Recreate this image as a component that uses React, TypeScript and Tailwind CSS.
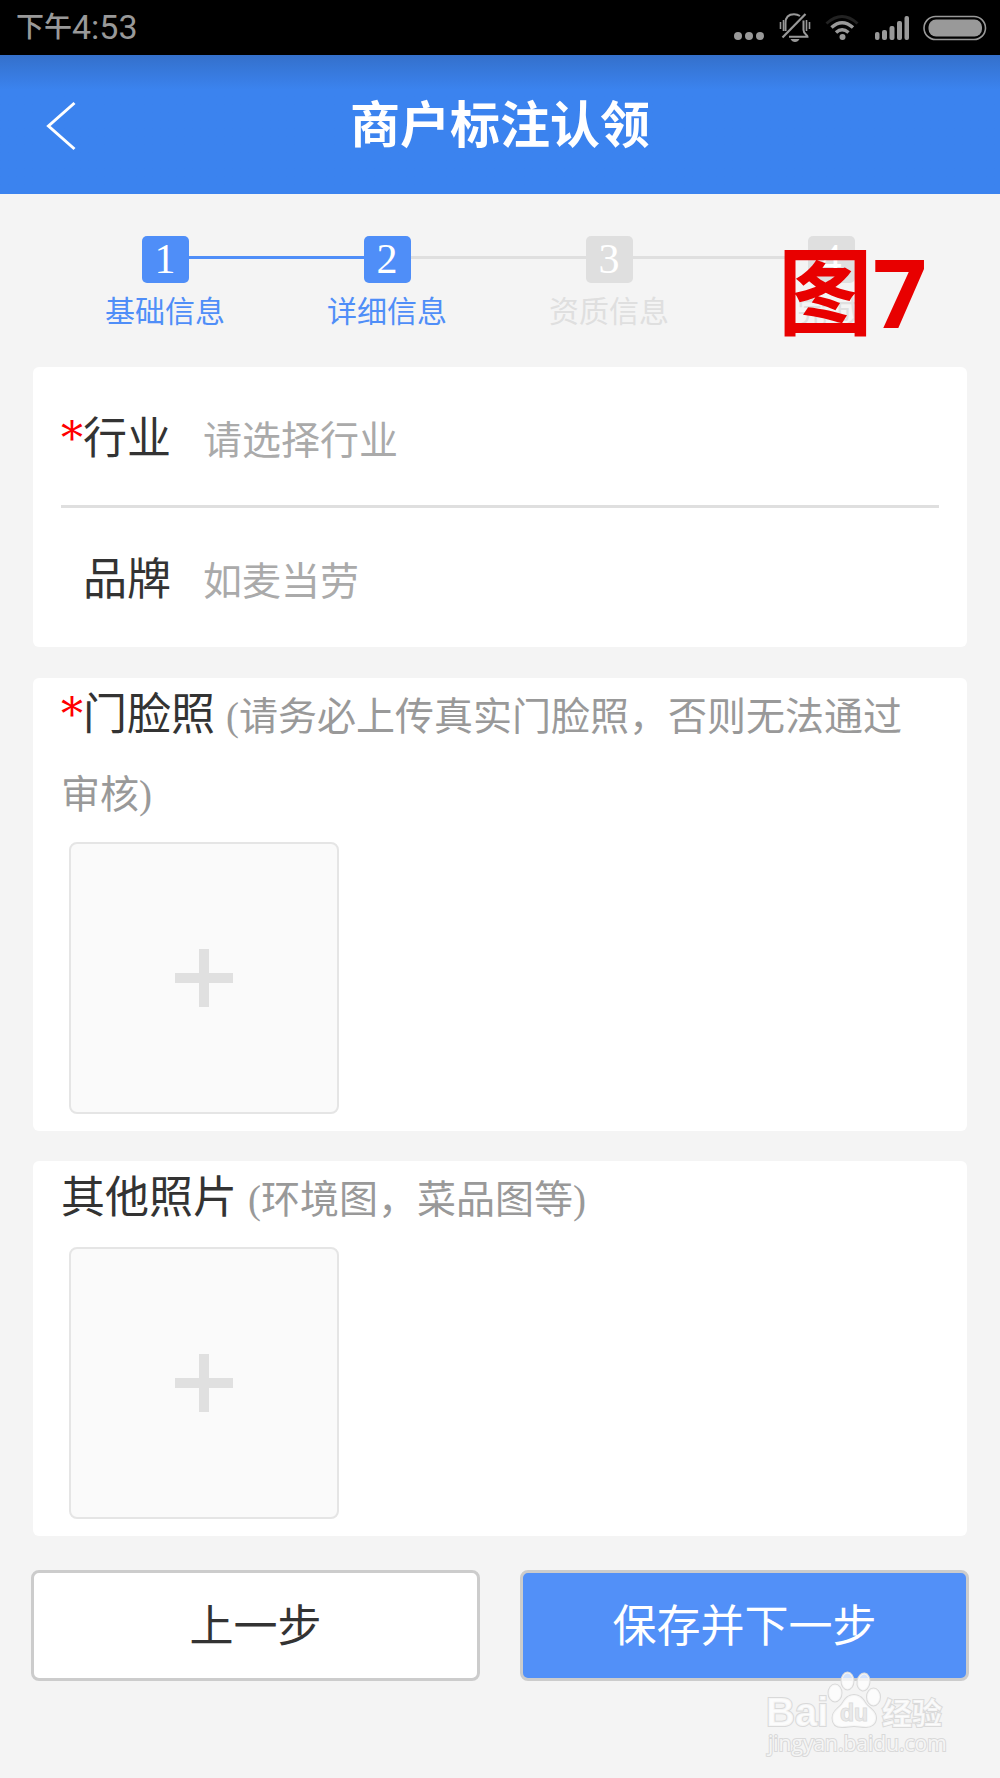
import { clsx } from 'clsx';

const steps = [
  { no: 1, label: '基础信息', done: true },
  { no: 2, label: '详细信息', done: true },
  { no: 3, label: '资质信息', done: false },
  { no: 4, label: '完 成', done: false },
];

const StatusBar = () => (
  <div className="h-[55px] bg-black text-[#999] flex items-center justify-between pl-4 pr-[13px]">
    <div className="flex items-center font-['Roboto','Noto_Sans_CJK_SC',sans-serif]">
      <span className="text-[28px] leading-[55px] font-medium">下午</span>
      <span className="text-[34px] leading-[55px]">4:53</span>
    </div>
    <div className="flex items-center gap-[13px]">
      <svg width="32" height="55" viewBox="0 0 32 55" fill="currentColor">
        <circle cx="5" cy="36" r="4" />
        <circle cx="16" cy="36" r="4" />
        <circle cx="27" cy="36" r="4" />
      </svg>
      <svg width="33" height="55" viewBox="0 0 33 55" fill="none" stroke="currentColor" strokeWidth="2">
        <path d="M7.500 31V23C7.500 17 11 14.300 16 14.300C18.500 14.300 20.500 15 22 16" />
        <path d="M11 36.700H29.500C29.500 34.500 25.500 34 25.500 30V20.500" />
        <path d="M27.500 14L4.500 37.500" strokeWidth="2.200" />
        <path d="M12.500 39H21.500C20.500 41 19 42 17 42C15 42 13.500 41 12.500 39Z" fill="currentColor" stroke="none" />
        <path d="M2.500 22V29M5.500 20V31M28.500 20V31M31.500 22V29" strokeWidth="1.600" />
      </svg>
      <svg width="35" height="55" viewBox="0 0 35 55" fill="none" stroke="currentColor" strokeWidth="3.500">
        <path d="M2.500 23.500Q18 9.500 33.500 23.500" stroke="#222" strokeWidth="3" />
        <path d="M7.500 27.500Q18 18 29 27.500" />
        <path d="M12 32.500Q18 27 24.500 32.500" />
        <circle cx="18.500" cy="37" r="3" fill="currentColor" stroke="none" />
      </svg>
      <svg width="38" height="55" viewBox="0 0 38 55" fill="currentColor">
        <rect x="3" y="32" width="4.500" height="8" rx="2" />
        <rect x="10" y="30" width="5" height="10" rx="2" />
        <rect x="17.500" y="26" width="5" height="14" rx="2" />
        <rect x="25" y="21" width="5" height="19" rx="2" />
        <rect x="32.500" y="16" width="4.500" height="24" rx="2" />
      </svg>
      <svg width="64" height="55" viewBox="0 0 64 55">
        <rect x="1" y="16.500" width="61.500" height="23" rx="11.500" fill="none" stroke="currentColor" strokeWidth="1.600" />
        <rect x="5.500" y="19.500" width="53.500" height="17" rx="7.500" fill="currentColor" />
      </svg>
    </div>
  </div>
);

const Header = () => (
  <header className="h-[139px] bg-[#3b83ef] bg-linear-to-b from-[#3470cb] to-[#3b83ef] to-25% grid grid-cols-[1fr_auto_1fr] items-center px-[45px] pt-0.5">
    <button aria-label="返回" className="justify-self-start">
      <svg width="32" height="50" viewBox="0 0 32 50" fill="none" stroke="#fff" strokeWidth="3">
        <path d="M29.500 2L3.500 25L29.500 48" />
      </svg>
    </button>
    <h1 className="text-white text-[50px] leading-[74px] font-bold">商户标注认领</h1>
  </header>
);

const Steps = () => (
  <ol className="flex pl-[54px] pr-[58px] pt-[42px]">
    {steps.map((step, i) => (
      <li key={step.no} className="flex-1 flex flex-col items-center gap-0.5">
        <div className="w-full flex items-center">
          <span
            className={clsx(
              'flex-1 h-[3px] mb-[5px]',
              i === 0 ? 'bg-transparent' : step.done ? 'bg-[#4f8ef8]' : 'bg-[#dfdfdf]'
            )}
          />
          <span
            className={clsx(
              'size-[47px] rounded-[5px] text-white text-[42px] leading-[47px] text-center',
              step.done ? 'bg-[#4f8ef8]' : 'bg-[#dfdfdf]'
            )}
          >
            {step.no}
          </span>
          <span
            className={clsx(
              'flex-1 h-[3px] mb-[5px]',
              i === steps.length - 1 ? 'bg-transparent' : steps[i + 1].done ? 'bg-[#4f8ef8]' : 'bg-[#dfdfdf]'
            )}
          />
        </div>
        <span className={clsx('text-[30px] leading-[54px]', step.done ? 'text-[#4f8ef8]' : 'text-[#dfdfdf]')}>
          {step.label}
        </span>
      </li>
    ))}
  </ol>
);

const Required = () => <span className="text-[#f00] font-['DejaVu_Serif',serif]">*</span>;

const UploadButton = ({ label }: { label: string }) => (
  <button
    aria-label={label}
    className="m-2 w-[270px] h-[272px] flex items-center justify-center rounded-lg border-2 border-[#e5e5e5] bg-[#fafafa]"
  >
    <svg width="58" height="58" viewBox="0 0 58 58" fill="#e0e0e0">
      <path d="M24 0h10v24h24v10H34v24H24V34H0V24h24z" />
    </svg>
  </button>
);

const Watermark = () => (
  <svg
    width="194"
    height="98"
    viewBox="0 0 194 98"
    className="absolute right-[15px] top-[95px] pointer-events-none"
    fill="#fff"
    fillOpacity="0.750"
    stroke="#d9d9d9"
    strokeWidth="2"
    paintOrder="stroke"
  >
    <ellipse cx="75" cy="28" rx="6.500" ry="8.500" />
    <ellipse cx="87.500" cy="16" rx="6" ry="8.500" />
    <ellipse cx="103.500" cy="17" rx="6" ry="8.500" transform="rotate(8 103.500 17)" />
    <ellipse cx="113.500" cy="32" rx="6.500" ry="8.500" />
    <path d="M94 30C100 30 103 34 106 39C110 44 116 46 116 53C116 59 111 62 106 62C101 62 98 61 94 61C90 61 87 62 82 62C76 62 72.500 59 72.500 53C72.500 46 78 44 82 39C85 34 88 30 94 30Z" />
    <text x="6" y="61" fontSize="40" fontWeight="700" className="font-['Liberation_Sans',sans-serif]">Bai</text>
    <text x="80" y="56" fontSize="23" fontWeight="700" fill="#e4e4e4" strokeWidth="1" className="font-['Liberation_Sans',sans-serif]">du</text>
    <text x="122" y="59" fontSize="30" fontWeight="700" className="font-['Noto_Sans_CJK_SC',sans-serif]">经验</text>
    <text x="8" y="86" fontSize="21" className="font-['Open_Sans',sans-serif]">jingyan.baidu.com</text>
  </svg>
);

export default function App() {
  return (
    <div className="relative min-h-screen bg-[#f4f4f4] text-[#333] font-['Liberation_Serif','Noto_Sans_CJK_SC',serif]">
      <StatusBar />
      <Header />
      <Steps />
      <div className="absolute right-[73px] top-[226px] text-[95px] leading-[130px] font-bold text-[#e80000] font-['Open_Sans','Noto_Sans_CJK_SC',sans-serif]">
        图7
      </div>

      <form className="px-[33px] pt-7" onSubmit={(e) => e.preventDefault()}>
        <section className="bg-white rounded-md px-7">
          <div className="h-[141px] flex items-center pt-1.5 border-b-[3px] border-[#dfdfdf]">
            <div className="w-full flex items-baseline gap-8">
              <label htmlFor="industry" className="text-[44px] leading-[66px]"><Required />行业</label>
              <input
                id="industry"
                placeholder="请选择行业"
                className="flex-1 min-w-0 text-[39px] outline-none placeholder:text-[#aaa]"
              />
            </div>
          </div>
          <div className="h-[139px] flex items-center pt-1.5">
            <div className="w-full flex items-baseline gap-8">
              <label htmlFor="brand" className="pl-[22px] text-[44px] leading-[66px]">品牌</label>
              <input
                id="brand"
                placeholder="如麦当劳"
                className="flex-1 min-w-0 text-[39px] outline-none placeholder:text-[#aaa]"
              />
            </div>
          </div>
        </section>

        <section className="mt-[31px] bg-white rounded-md px-7 pb-[9px] flow-root">
          <p className="text-[39px] leading-[78px] text-[#999]">
            <span className="text-[44px] leading-[60px] text-[#333]"><Required />门脸照 </span>
            (请务必上传真实门脸照，否则无法通过审核)
          </p>
          <UploadButton label="上传门脸照" />
        </section>

        <section className="mt-[30px] bg-white rounded-md px-7 pb-[9px] flow-root">
          <p className="text-[39px] leading-[78px] text-[#999]">
            <span className="text-[44px] leading-[60px] text-[#333]">其他照片 </span>
            (环境图，菜品图等)
          </p>
          <UploadButton label="上传其他照片" />
        </section>

        <div className="relative -mx-0.5 mt-[34px] flex gap-10 text-[44px]">
          <button type="button" className="flex-1 h-[111px] pt-1 rounded-lg border-[3px] border-[#ccc] bg-white">
            上一步
          </button>
          <button type="submit" className="flex-1 h-[111px] pt-1 rounded-lg border-[3px] border-[#ccc] bg-[#5290f8] text-white">
            保存并下一步
          </button>
          <Watermark />
        </div>
      </form>
    </div>
  );
}
